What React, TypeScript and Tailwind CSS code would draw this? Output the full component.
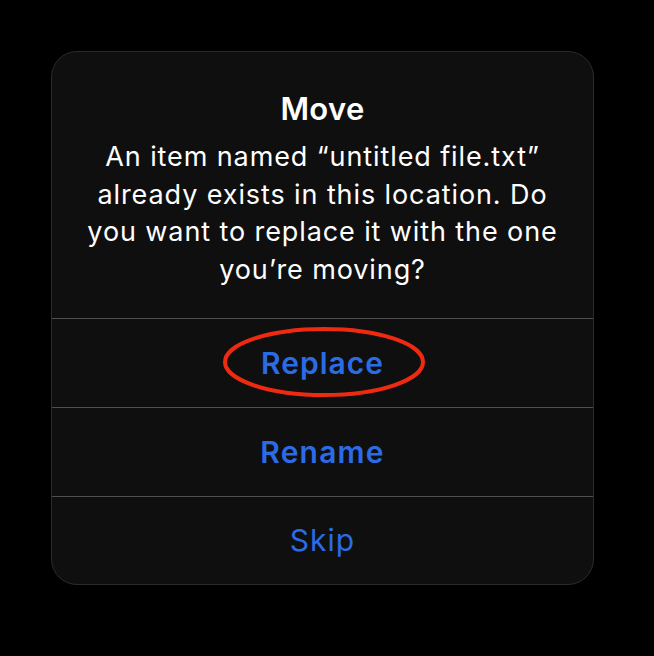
import React from "react";

export default function App() {
  return (
    <div className="w-[654px] h-[656px] bg-black flex items-start justify-start pl-[51px] pt-[51px]" style={{ fontFamily: "Inter, 'Noto Sans', sans-serif" }}>
      <div className="w-[543px] h-[534px] rounded-[26px] border border-[#2b2b2b] bg-[#0f0f0f] flex flex-col overflow-hidden">
        <div className="h-[266px] flex flex-col items-center pt-[40px]">
          <div className="text-white text-[31px] font-semibold leading-[34px] tracking-[0.3px]">Move</div>
          <div className="mt-[12px] text-white text-[27px] leading-[37.5px] text-center tracking-[0.9px] flex flex-col items-center">
            <span className="whitespace-nowrap">An item named “untitled file.txt”</span>
            <span className="whitespace-nowrap">already exists in this location. Do</span>
            <span className="whitespace-nowrap">you want to replace it with the one</span>
            <span className="whitespace-nowrap">you’re moving?</span>
          </div>
        </div>
        <div className="h-px bg-[#505050]" />
        <div className="relative h-[88px] flex items-center justify-center">
          <span className="text-[#2b6be6] text-[30px] font-semibold tracking-[1px]">Replace</span>
          <svg className="absolute left-[170px] top-[3px]" width="204" height="80" viewBox="0 0 204 80">
            <ellipse cx="102" cy="40" rx="99" ry="33" fill="none" stroke="#f02a10" strokeWidth="4" />
          </svg>
        </div>
        <div className="h-px bg-[#505050]" />
        <div className="h-[88px] flex items-center justify-center">
          <span className="text-[#2b6be6] text-[30px] font-semibold tracking-[1.2px]">Rename</span>
        </div>
        <div className="h-px bg-[#505050]" />
        <div className="flex-1 flex items-center justify-center">
          <span className="text-[#2b6be6] text-[30px] tracking-[1px]">Skip</span>
        </div>
      </div>
    </div>
  );
}
